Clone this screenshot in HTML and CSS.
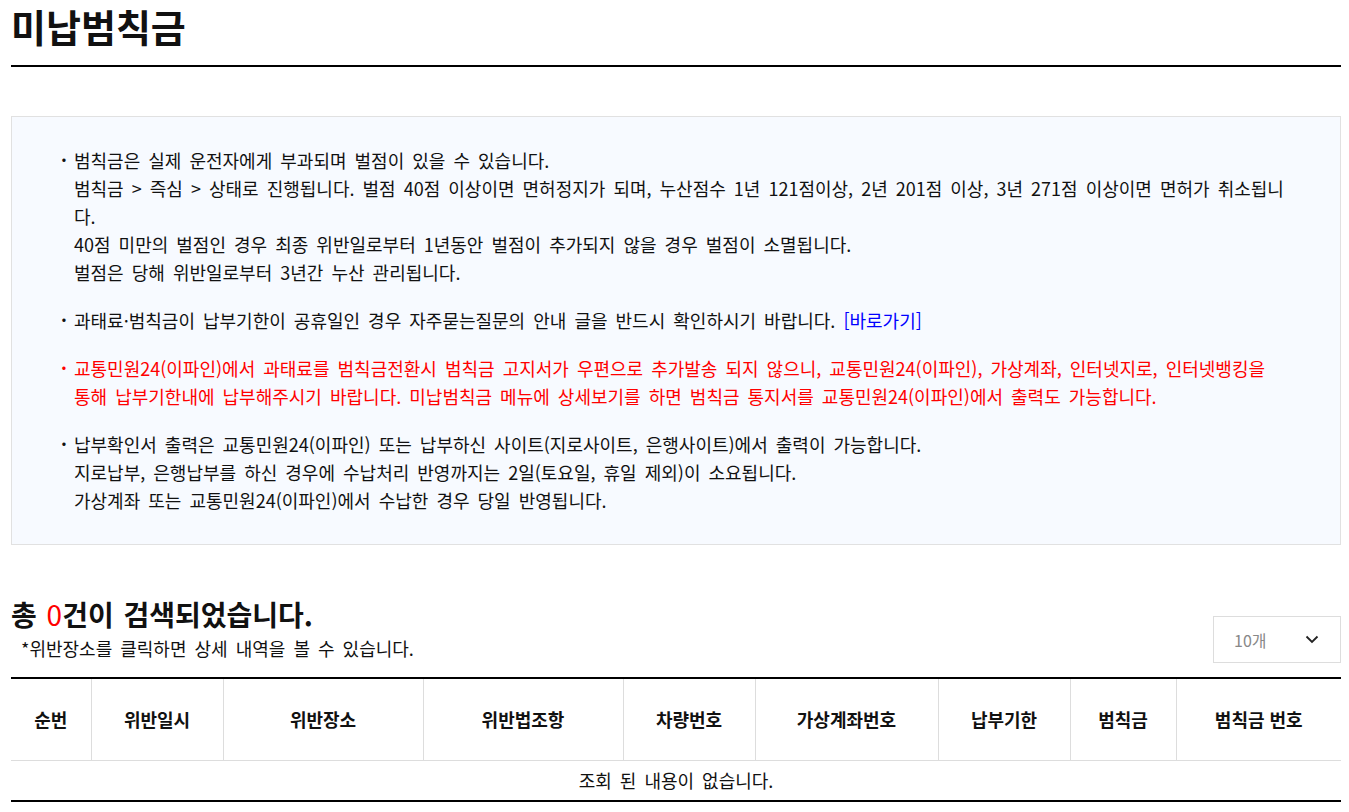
FILE: index.html
```html
<!DOCTYPE html>
<html lang="ko">

<head>
    <meta charset="UTF-8">
    <title>미납범칙금</title>
    <meta name="viewport" content="width=device-width, initial-scale=1.0">
    <link rel="stylesheet" href="styles.css">
</head>

<body>
    <div class="page">
        <h1 class="page-title">미납범칙금</h1>

        <ul class="notice">
            <li>범칙금은 실제 운전자에게 부과되며 벌점이 있을 수 있습니다.<br>
                범칙금 &gt; 즉심 &gt; 상태로 진행됩니다. 벌점 40점 이상이면 면허정지가 되며, 누산점수 1년 121점이상, 2년 201점 이상, 3년 271점 이상이면 면허가 취소됩니다.<br>
                40점 미만의 벌점인 경우 최종 위반일로부터 1년동안 벌점이 추가되지 않을 경우 벌점이 소멸됩니다.<br>
                벌점은 당해 위반일로부터 3년간 누산 관리됩니다.</li>
            <li>과태료·범칙금이 납부기한이 공휴일인 경우 자주묻는질문의 안내 글을 반드시 확인하시기 바랍니다. <a href="#" class="link">[바로가기]</a></li>
            <li class="warn">교통민원24(이파인)에서 과태료를 범칙금전환시 범칙금 고지서가 우편으로 추가발송 되지 않으니, 교통민원24(이파인), 가상계좌, 인터넷지로, 인터넷뱅킹을 통해 납부기한내에 납부해주시기 바랍니다. 미납범칙금 메뉴에 상세보기를 하면 범칙금 통지서를 교통민원24(이파인)에서 출력도 가능합니다.</li>
            <li>납부확인서 출력은 교통민원24(이파인) 또는 납부하신 사이트(지로사이트, 은행사이트)에서 출력이 가능합니다.<br>
                지로납부, 은행납부를 하신 경우에 수납처리 반영까지는 2일(토요일, 휴일 제외)이 소요됩니다.<br>
                가상계좌 또는 교통민원24(이파인)에서 수납한 경우 당일 반영됩니다.</li>
        </ul>

        <div class="result-bar">
            <div>
                <h2 class="result-count">총 <span class="num">0</span>건이 검색되었습니다.</h2>
                <p class="result-hint">*위반장소를 클릭하면 상세 내역을 볼 수 있습니다.</p>
            </div>
            <div class="select">
                <span>10개</span>
                <svg width="14" height="9" viewBox="0 0 14 9"><path d="M1.5 1.5 L7 7 L12.5 1.5" fill="none" stroke="#222" stroke-width="1.8"/></svg>
            </div>
        </div>

        <table class="list">
            <colgroup>
                <col style="width:80px">
                <col style="width:132px">
                <col style="width:200px">
                <col style="width:200px">
                <col style="width:132px">
                <col style="width:183px">
                <col style="width:132px">
                <col style="width:106px">
                <col>
            </colgroup>
            <thead>
                <tr>
                    <th>순번</th>
                    <th>위반일시</th>
                    <th>위반장소</th>
                    <th>위반법조항</th>
                    <th>차량번호</th>
                    <th>가상계좌번호</th>
                    <th>납부기한</th>
                    <th>범칙금</th>
                    <th>범칙금 번호</th>
                </tr>
            </thead>
            <tbody>
                <tr>
                    <td colspan="9">조회 된 내용이 없습니다.</td>
                </tr>
            </tbody>
        </table>
    </div>
</body>

</html>
```

FILE: styles.css
```css
* {
    margin: 0;
    padding: 0;
    box-sizing: border-box;
}

body {
    font-family: "Noto Sans CJK KR", "Noto Sans", sans-serif;
    color: #111;
    background: white;
}

.page {
    padding: 0 8px 0 11px;
}

.page-title {
    font-size: 38px;
    font-weight: 700;
    line-height: 52px;
    padding-bottom: 13px;
    border-bottom: 2px solid #000;
    margin-bottom: 49px;
}

.notice {
    list-style: none;
    background: #f7faff;
    border: 1px solid #e1e1e1;
    padding: 29px 52px 30px 51px;
    font-size: 18px;
    line-height: 28px;
    word-spacing: 3px;
}

.notice li {
    position: relative;
    padding-left: 11px;
    margin-bottom: 20px;
}

.notice li:last-child {
    margin-bottom: 0;
}

.notice li::before {
    content: "·";
    position: absolute;
    left: -2px;
    top: -1px;
    font-weight: 700;
}

.notice .warn {
    color: #f00;
}

.link {
    color: #00f;
    text-decoration: none;
}

.result-bar {
    display: flex;
    justify-content: space-between;
    align-items: flex-end;
    margin-top: 50px;
    margin-bottom: 14px;
}

.result-count {
    font-size: 28px;
    font-weight: 700;
    line-height: 38px;
    word-spacing: 2px;
}

.result-count .num {
    color: #f00;
    font-weight: 400;
}

.result-hint {
    font-size: 18px;
    line-height: 30px;
    padding-left: 10px;
    word-spacing: 3px;
}

.select {
    width: 128px;
    height: 47px;
    border: 1px solid #ddd;
    display: flex;
    align-items: center;
    justify-content: space-between;
    padding: 0 21px 0 20px;
    font-size: 16px;
    color: #888;
}

.list {
    width: 100%;
    border-collapse: collapse;
    table-layout: fixed;
    border-top: 2px solid #000;
    border-bottom: 2px solid #000;
}

.list th {
    height: 82px;
    font-size: 18px;
    font-weight: 700;
    border-left: 1px solid #ddd;
    border-bottom: 1px solid #ddd;
}

.list th:first-child {
    border-left: none;
}

.list td {
    height: 41px;
    text-align: center;
    font-size: 18px;
    word-spacing: 3px;
}
```
